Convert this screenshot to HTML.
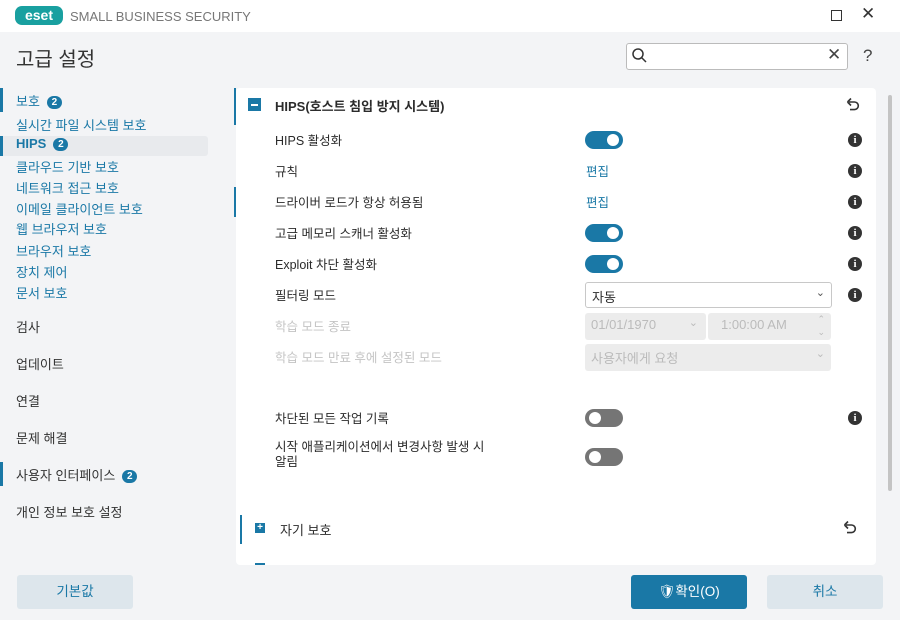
<!DOCTYPE html>
<html><head><meta charset="utf-8"><style>
*{margin:0;padding:0;box-sizing:border-box}
body{width:900px;height:620px;overflow:hidden;background:#f3f4f6;font-family:"Liberation Sans","Noto Sans CJK KR",sans-serif;font-size:13px;color:#2b2b2b;position:relative}
.abs{position:absolute}
.top{left:0;top:0;width:900px;height:32px;background:#fff}
.nav{font-size:13px;color:#1a78a6;white-space:nowrap}
.cat{font-size:13px;color:#333;white-space:nowrap}
.badge{display:inline-block;background:#1a78a6;color:#fff;border-radius:8px;font-size:10px;font-weight:bold;width:15px;height:13px;line-height:13px;text-align:center;margin-left:7px;vertical-align:1px}
.panel{left:236px;top:88px;width:640px;height:477px;background:#fff;border-radius:4px;overflow:hidden}
.lbl{font-size:12.5px;color:#2b2b2b;white-space:nowrap}
.dis{color:#c4c4c4}
.tog{width:38px;height:18px;border-radius:9px;background:#1a78a6}
.tog::after{content:"";position:absolute;right:4px;top:3px;width:12px;height:12px;border-radius:6px;background:#fff}
.off{background:#757575}
.off::after{left:4px;right:auto}
.info{width:14px;height:14px;border-radius:7px;background:#333;color:#fff;font-size:11px;font-weight:bold;text-align:center;line-height:14px;font-family:"Liberation Serif",serif}
.edit{color:#1a78a6;font-size:12.5px}
.sel{border:1px solid #c8c8c8;border-radius:3px;background:#fff;height:26px;font-size:13px;padding:4px 6px}
.dsel{background:#ececec;border-radius:3px;height:27px;color:#bbb;font-size:13px;padding:4px 6px}
.btn{height:34px;border-radius:3px;text-align:center;line-height:34px;font-size:13.5px}
</style></head><body>
<div class="abs top"></div>
<div class="abs" style="left:15px;top:6px;width:48px;height:19px;border-radius:7px;background:#19a0a0;color:#fff;font-weight:bold;font-size:14px;line-height:19px;text-align:center">eset</div>
<div class="abs" style="left:70px;top:9px;font-size:13px;color:#777">SMALL BUSINESS SECURITY</div>
<div class="abs" style="left:831px;top:10px;width:11px;height:11px;border:1.3px solid #333"></div>
<div class="abs" style="left:861px;top:4px;font-size:17px;color:#333">✕</div>
<div class="abs" style="left:16px;top:43px;font-size:20px;color:#333">고급 설정</div>
<div class="abs" style="left:626px;top:43px;width:222px;height:27px;border:1px solid #bbb;border-radius:3px;background:#fff"></div>
<svg class="abs" style="left:631px;top:47px" width="18" height="18"><circle cx="7" cy="7" r="5" fill="none" stroke="#333" stroke-width="1.5"/><line x1="10.5" y1="10.5" x2="15" y2="15" stroke="#333" stroke-width="1.5"/></svg>
<div class="abs" style="left:827px;top:45px;font-size:17px;color:#444">✕</div>
<div class="abs" style="left:863px;top:46px;font-size:17px;color:#444">?</div>

<div class="abs" style="left:0;top:88px;width:3px;height:24px;background:#1a78a6"></div>
<div class="abs" style="left:0;top:136px;width:208px;height:20px;background:#e8eaed;border-radius:3px"></div>
<div class="abs" style="left:0;top:136px;width:3px;height:20px;background:#1a78a6"></div>
<div class="abs" style="left:0;top:462px;width:3px;height:24px;background:#1a78a6"></div>
<div class="abs nav" style="left:16px;top:91px">보호<span class="badge">2</span></div>
<div class="abs nav" style="left:16px;top:115px">실시간 파일 시스템 보호</div>
<div class="abs nav" style="left:16px;top:136px;font-weight:bold">HIPS<span class="badge">2</span></div>
<div class="abs nav" style="left:16px;top:157px">클라우드 기반 보호</div>
<div class="abs nav" style="left:16px;top:178px">네트워크 접근 보호</div>
<div class="abs nav" style="left:16px;top:199px">이메일 클라이언트 보호</div>
<div class="abs nav" style="left:16px;top:219px">웹 브라우저 보호</div>
<div class="abs nav" style="left:16px;top:241px">브라우저 보호</div>
<div class="abs nav" style="left:16px;top:262px">장치 제어</div>
<div class="abs nav" style="left:16px;top:283px">문서 보호</div>
<div class="abs cat" style="left:16px;top:317px">검사</div>
<div class="abs cat" style="left:16px;top:354px">업데이트</div>
<div class="abs cat" style="left:16px;top:391px">연결</div>
<div class="abs cat" style="left:16px;top:428px">문제 해결</div>
<div class="abs cat" style="left:16px;top:465px">사용자 인터페이스<span class="badge">2</span></div>
<div class="abs cat" style="left:16px;top:502px">개인 정보 보호 설정</div>

<div class="abs panel"></div>
<div class="abs" style="left:234px;top:88px;width:2px;height:37px;background:#1a78a6"></div>
<div class="abs" style="left:234px;top:187px;width:2px;height:30px;background:#1a78a6"></div>
<div class="abs" style="left:248px;top:98px;width:13px;height:13px;background:#1a78a6"><div style="position:absolute;left:3px;top:5.5px;width:7px;height:2px;background:#fff"></div></div>
<div class="abs lbl" style="left:275px;top:96px;font-weight:bold;font-size:13px">HIPS(호스트 침입 방지 시스템)</div>
<svg class="abs" style="left:846px;top:97px" width="14" height="16"><path d="M3 5 H8.5 A3.8 3.8 0 0 1 8.5 12.6 H4" fill="none" stroke="#333" stroke-width="1.6"/><path d="M1.5 5 L5 1.5 M1.5 5 L5 8.5" stroke="#333" stroke-width="1.6"/></svg>

<div class="abs lbl" style="left:275px;top:130px">HIPS 활성화</div>
<div class="abs tog" style="left:585px;top:131px"></div>
<div class="abs info" style="left:848px;top:133px">i</div>
<div class="abs lbl" style="left:275px;top:161px">규칙</div>
<div class="abs edit" style="left:586px;top:161px">편집</div>
<div class="abs info" style="left:848px;top:164px">i</div>
<div class="abs lbl" style="left:275px;top:192px">드라이버 로드가 항상 허용됨</div>
<div class="abs edit" style="left:586px;top:192px">편집</div>
<div class="abs info" style="left:848px;top:195px">i</div>
<div class="abs lbl" style="left:275px;top:223px">고급 메모리 스캐너 활성화</div>
<div class="abs tog" style="left:585px;top:224px"></div>
<div class="abs info" style="left:848px;top:226px">i</div>
<div class="abs lbl" style="left:275px;top:254px">Exploit 차단 활성화</div>
<div class="abs tog" style="left:585px;top:255px"></div>
<div class="abs info" style="left:848px;top:257px">i</div>
<div class="abs lbl" style="left:275px;top:285px">필터링 모드</div>
<div class="abs sel" style="left:585px;top:282px;width:247px">자동<span style="position:absolute;right:6px;top:3px;color:#555;font-size:11px">⌄</span></div>
<div class="abs info" style="left:848px;top:288px">i</div>
<div class="abs lbl dis" style="left:275px;top:316px">학습 모드 종료</div>
<div class="abs dsel" style="left:585px;top:313px;width:121px">01/01/1970<span style="position:absolute;right:8px;top:3px;font-size:11px">⌄</span></div>
<div class="abs dsel" style="left:708px;top:313px;width:123px;padding-left:13px">1:00:00 AM<span style="position:absolute;right:6px;top:0;font-size:9px;line-height:13px">⌃<br>⌄</span></div>
<div class="abs lbl dis" style="left:275px;top:347px">학습 모드 만료 후에 설정된 모드</div>
<div class="abs dsel" style="left:585px;top:344px;width:246px">사용자에게 요청<span style="position:absolute;right:6px;top:3px;font-size:11px">⌄</span></div>
<div class="abs lbl" style="left:275px;top:408px">차단된 모든 작업 기록</div>
<div class="abs tog off" style="left:585px;top:409px"></div>
<div class="abs info" style="left:848px;top:411px">i</div>
<div class="abs lbl" style="left:275px;top:440px;line-height:15px">시작 애플리케이션에서 변경사항 발생 시<br>알림</div>
<div class="abs tog off" style="left:585px;top:448px"></div>

<div class="abs" style="left:240px;top:515px;width:2px;height:29px;background:#1a78a6"></div>
<div class="abs" style="left:255px;top:523px;width:10px;height:10px;background:#1a78a6;color:#fff;font-size:10px;line-height:10px;text-align:center;font-weight:bold">+</div>
<div class="abs lbl" style="left:280px;top:520px;font-size:13px">자기 보호</div>
<svg class="abs" style="left:843px;top:520px" width="14" height="16"><path d="M3 5 H8.5 A3.8 3.8 0 0 1 8.5 12.6 H4" fill="none" stroke="#333" stroke-width="1.6"/><path d="M1.5 5 L5 1.5 M1.5 5 L5 8.5" stroke="#333" stroke-width="1.6"/></svg>
<div class="abs" style="left:255px;top:563px;width:10px;height:2px;background:#1a78a6"></div>
<div class="abs" style="left:888px;top:95px;width:4px;height:396px;background:#c4c4c4;border-radius:2px"></div>

<div class="abs btn" style="left:17px;top:575px;width:116px;background:#dde6ec;color:#1a78a6">기본값</div>
<div class="abs btn" style="left:631px;top:575px;width:116px;background:#1a78a6;color:#fff">🛡확인(O)</div>
<div class="abs btn" style="left:767px;top:575px;width:116px;background:#dde6ec;color:#1a78a6">취소</div>
</body></html>
